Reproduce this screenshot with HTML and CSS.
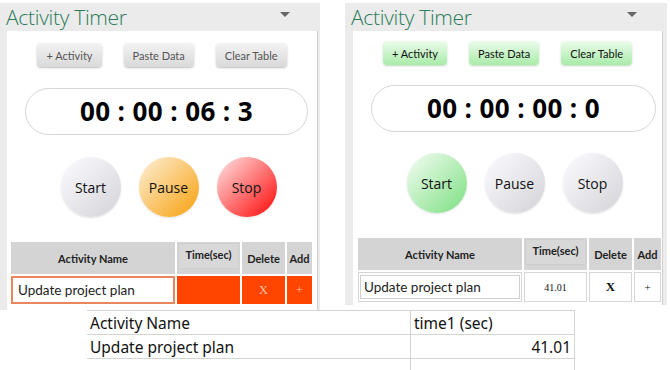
FILE: index.html
```html
<!DOCTYPE html>
<html lang="en">
<head>
    <meta charset="UTF-8">
    <title>Activity Timer</title>
    <link rel="stylesheet" href="styles.css">
</head>
<body>
<div class="shots">
    <div class="pane pane-run">
        <div class="pane-head">
            <span class="title">Activity Timer</span>
            <span class="caret"></span>
        </div>
        <div class="pane-body">
            <div class="tools">
                <button class="tool" type="button">+ Activity</button>
                <button class="tool" type="button">Paste Data</button>
                <button class="tool" type="button">Clear Table</button>
            </div>
            <div class="clock">00 : 00 : 06 : 3</div>
            <div class="rounds">
                <button class="round" type="button">Start</button>
                <button class="round pause-on" type="button">Pause</button>
                <button class="round stop-on" type="button">Stop</button>
            </div>
            <table class="acts">
                <tr>
                    <th class="c-name">Activity Name</th>
                    <th class="c-time"><span>Time(sec)</span></th>
                    <th class="c-del">Delete</th>
                    <th class="c-add">Add</th>
                </tr>
                <tr class="hot">
                    <td class="c-name"><div class="ipt">Update project plan</div></td>
                    <td class="c-time"></td>
                    <td class="c-del">X</td>
                    <td class="c-add">+</td>
                </tr>
            </table>
        </div>
    </div>
    <div class="pane pane-idle">
        <div class="pane-head">
            <span class="title">Activity Timer</span>
            <span class="caret"></span>
        </div>
        <div class="pane-body">
            <div class="tools">
                <button class="tool green" type="button">+ Activity</button>
                <button class="tool green" type="button">Paste Data</button>
                <button class="tool green" type="button">Clear Table</button>
            </div>
            <div class="clock">00 : 00 : 00 : 0</div>
            <div class="rounds">
                <button class="round start-on" type="button">Start</button>
                <button class="round" type="button">Pause</button>
                <button class="round" type="button">Stop</button>
            </div>
            <table class="acts">
                <tr>
                    <th class="c-name">Activity Name</th>
                    <th class="c-time"><span>Time(sec)</span></th>
                    <th class="c-del">Delete</th>
                    <th class="c-add">Add</th>
                </tr>
                <tr class="done">
                    <td class="c-name"><div class="ipt">Update project plan</div></td>
                    <td class="c-time">41.01</td>
                    <td class="c-del">X</td>
                    <td class="c-add">+</td>
                </tr>
            </table>
        </div>
    </div>
</div>
<table class="sheet">
    <tr>
        <td class="s-a">Activity Name</td>
        <td class="s-b">time1 (sec)</td>
        <td class="s-c"></td>
    </tr>
    <tr>
        <td class="s-a">Update project plan</td>
        <td class="s-b num">41.01</td>
        <td class="s-c"></td>
    </tr>
    <tr>
        <td class="s-a"></td>
        <td class="s-b"></td>
        <td class="s-c"></td>
    </tr>
</table>
</body>
</html>
```

FILE: styles.css
```css
body {
    margin: 0;
    background-color: #fff;
    font-family: "Open Sans", "Noto Sans", sans-serif;
    color: #111;
}

.shots {
    display: flex;
    gap: 25px;
    height: 310px;
    padding-top: 3px;
    box-sizing: border-box;
}

.pane {
    width: 320px;
    background-color: #ebebeb;
    display: flex;
    flex-direction: column;
}

.pane-idle {
    width: 322px;
    height: 302px;
}

.pane-head {
    height: 28px;
    display: flex;
    align-items: center;
    justify-content: space-between;
    padding: 0 30px 0 6px;
}

.title {
    font-size: 21px;
    font-weight: 300;
    color: #2a7b57;
    letter-spacing: -0.3px;
    line-height: 28px;
}

.caret {
    width: 0;
    height: 0;
    border-left: 5px solid transparent;
    border-right: 5px solid transparent;
    border-top: 5px solid #666;
    margin-top: -6px;
}

.pane-body {
    flex: 1;
    margin: 0 2px 0 7px;
    background-color: #fff;
    border-right: 1px solid #d0d0d0;
    display: flex;
    flex-direction: column;
    align-items: flex-start;
}

.pane-idle .pane-body {
    margin: 0 4px 0 8px;
}

.tools {
    align-self: stretch;
    display: flex;
    justify-content: center;
    gap: 22px;
    margin-top: 12px;
}

.pane-idle .tools {
    margin-top: 10px;
}

.tool {
    height: 24px;
    padding: 0 9px;
    border: none;
    border-radius: 4px;
    background: linear-gradient(#f3f3f3, #d9d9d9);
    box-shadow: 0 1px 2px rgba(0, 0, 0, 0.25);
    font-family: Lato, "Open Sans", sans-serif;
    font-size: 11px;
    color: #555;
}

.tool.green {
    background: linear-gradient(#ecfcec, #a9eba9);
    box-shadow: 0 1px 2px rgba(40, 120, 40, 0.3);
    color: #111;
}

.clock {
    align-self: stretch;
    height: 47px;
    margin: 21px 9px 0 18px;
    border: 1px solid #d6d6d6;
    border-radius: 24px;
    box-sizing: border-box;
    text-align: center;
    font-size: 26px;
    font-weight: 700;
    line-height: 45px;
    letter-spacing: 0.4px;
    color: #000;
}

.pane-idle .clock {
    margin: 20px 6px 0 18px;
}

.rounds {
    align-self: stretch;
    display: flex;
    justify-content: center;
    gap: 18px;
    margin: 22px 0 0 13px;
}

.pane-idle .rounds {
    margin: 21px 0 0 14px;
}

.round {
    width: 60px;
    height: 60px;
    border: none;
    border-radius: 50%;
    background: linear-gradient(135deg, #f6f6fa 15%, #d6d6da 95%);
    box-shadow: 0 1px 2px rgba(0, 0, 0, 0.12);
    font-family: inherit;
    font-size: 14px;
    color: #111;
    padding: 0;
}

.round.pause-on {
    background: linear-gradient(135deg, #fde8c4 10%, #f8a820 90%);
}

.round.stop-on {
    background: linear-gradient(135deg, #ffd0d0 10%, #ff1c1c 90%);
}

.round.start-on {
    background: linear-gradient(135deg, #e9fae9 10%, #88e28c 90%);
}

.acts {
    width: 305px;
    table-layout: fixed;
    margin: 23px 0 0 2px;
    border-collapse: separate;
    border-spacing: 2px;
    font-family: Lato, "Open Sans", sans-serif;
    font-size: 11px;
}

.pane-idle .acts {
    width: 307px;
    margin: 23px 0 0 3px;
}

.acts th {
    height: 32px;
    background-color: #d4d4d4;
    font-weight: 700;
    color: #222;
    padding: 0;
}

.acts th.c-time {
    vertical-align: top;
}

.acts th.c-time span {
    display: block;
    margin: 1px;
    padding-top: 4px;
    height: 20px;
    background-color: #d8d8d8;
    border: 1px solid #cfcfcf;
}

.c-name {
    width: 164px;
}

.c-time {
    width: 63px;
}

.c-del {
    width: 43px;
}

.acts td {
    height: 28px;
    padding: 0;
    text-align: center;
    font-family: "Liberation Serif", serif;
}

.ipt {
    height: 28px;
    box-sizing: border-box;
    padding-left: 5px;
    font-family: Lato, "Open Sans", sans-serif;
    font-size: 13.5px;
    line-height: 25px;
    text-align: left;
    color: #222;
}

.hot td {
    background-color: #ff4500;
    color: #ffc2a8;
}

.hot .c-name {
    background-color: #fff;
}

.hot .ipt {
    border: 2px solid #e8865e;
}

.hot .c-del {
    font-size: 13px;
}

.hot .c-add {
    font-size: 12px;
}

.done td {
    height: 26px;
    border: 1px solid #d6d6d6;
    color: #111;
}

.done .c-name {
    padding: 1px;
}

.done .ipt {
    height: 24px;
    line-height: 23px;
    border: 1px solid #d0d0d0;
    padding-left: 3px;
}

.done .c-time {
    font-size: 10px;
}

.done .c-del {
    font-size: 13px;
    font-weight: 700;
}

.sheet {
    margin-left: 87px;
    border-collapse: collapse;
    font-family: "Noto Sans", "Open Sans", sans-serif;
    font-size: 15.5px;
    color: #111;
}

.sheet td {
    height: 23px;
    padding: 0 3px;
    border-top: 1px solid #d4d4d4;
    border-bottom: 1px solid #d4d4d4;
    border-left: 1px solid #d4d4d4;
}

.sheet .s-a {
    width: 317px;
    border-left: none;
}

.sheet .s-b {
    width: 157px;
}

.sheet .s-c {
    width: 0;
    padding: 0;
}

.sheet .num {
    text-align: right;
}
```
